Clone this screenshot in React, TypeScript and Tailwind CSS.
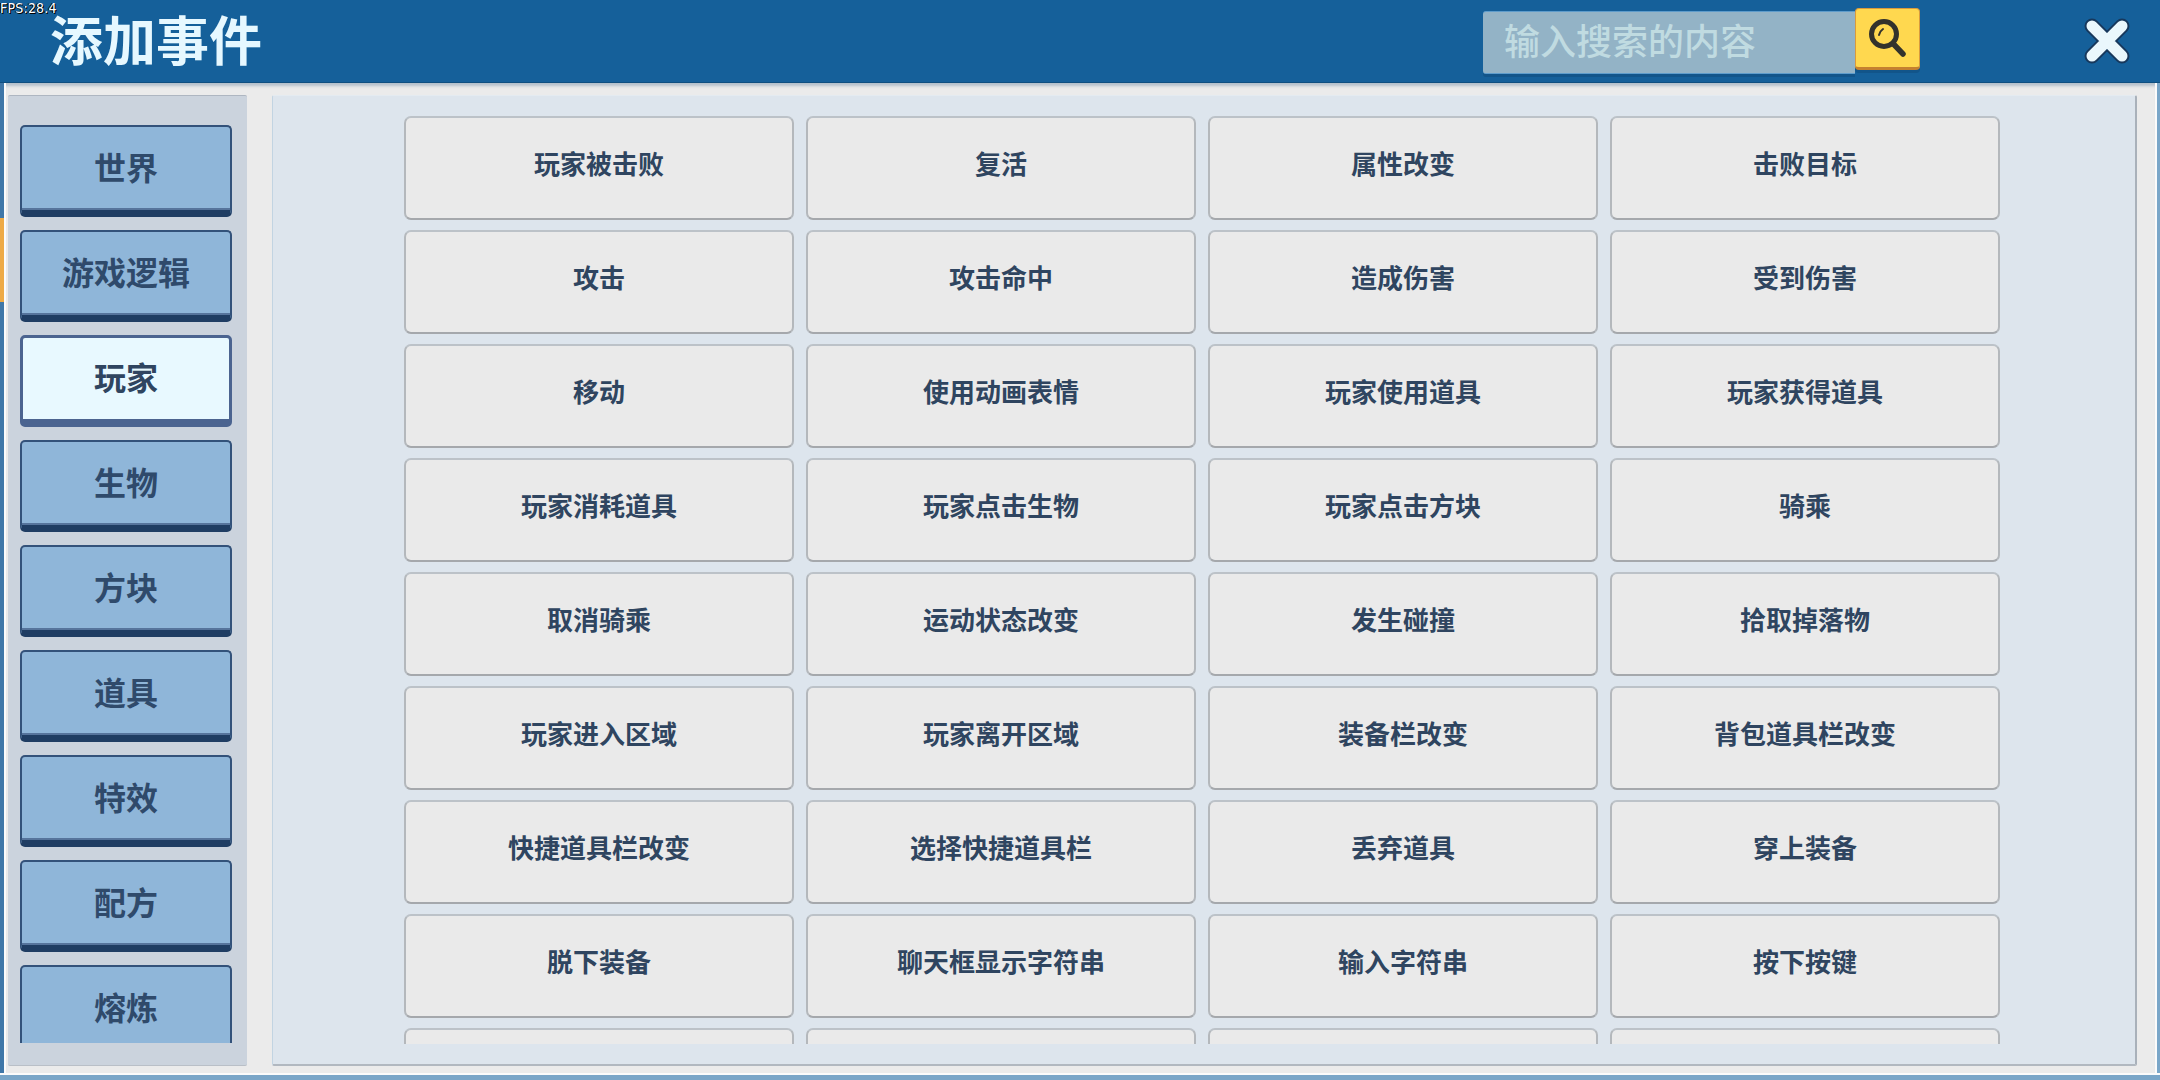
const categories = ['世界', '游戏逻辑', '玩家', '生物', '方块', '道具', '特效', '配方', '熔炼'];

const events = [
  '玩家被击败', '复活', '属性改变', '击败目标',
  '攻击', '攻击命中', '造成伤害', '受到伤害',
  '移动', '使用动画表情', '玩家使用道具', '玩家获得道具',
  '玩家消耗道具', '玩家点击生物', '玩家点击方块', '骑乘',
  '取消骑乘', '运动状态改变', '发生碰撞', '拾取掉落物',
  '玩家进入区域', '玩家离开区域', '装备栏改变', '背包道具栏改变',
  '快捷道具栏改变', '选择快捷道具栏', '丢弃道具', '穿上装备',
  '脱下装备', '聊天框显示字符串', '输入字符串', '按下按键',
  '', '', '', '',
];

const ACTIVE = '玩家';

function SearchIcon() {
  return (
    <svg width="44" height="44" viewBox="0 0 44 44" fill="none">
      <circle cx="18" cy="18" r="12.5" stroke="#33322c" strokeWidth="5" />
      <path d="M27.5 28 L37 38" stroke="#33322c" strokeWidth="5.5" strokeLinecap="round" />
      <path d="M13 19 Q14 15 17 13" stroke="#33322c" strokeWidth="2" strokeLinecap="round" />
    </svg>
  );
}

function CloseIcon() {
  return (
    <svg width="50" height="50" viewBox="0 0 50 50" fill="none">
      <path d="M10 10 L40 40 M40 10 L10 40" stroke="#17385c" strokeWidth="15" strokeLinecap="round" />
      <path d="M10 10 L40 40 M40 10 L10 40" stroke="#eaf7fc" strokeWidth="11" strokeLinecap="round" />
    </svg>
  );
}

export default function App() {
  return (
    <div className="relative flex h-[1080px] w-[2160px] flex-col overflow-hidden bg-[#ebebeb] font-['Noto_Sans_CJK_SC',sans-serif] text-[#2f4560]">
      {/* FPS counter */}
      <div className="absolute left-0 top-0 z-10 font-['DejaVu_Sans_Condensed','DejaVu_Sans',sans-serif] text-[14px] leading-[16px] tracking-[0.2px] text-white [text-shadow:1px_1px_0_#000,-1px_0_0_#000]">
        FPS:28.4
      </div>

      {/* Header */}
      <header className="flex h-[83px] shrink-0 items-center border-b border-[#0f4f80] bg-[#15609a] pl-[50px] pr-[28px]">
        <h1 className="pb-[5px] text-[53px] font-bold leading-none text-[#e6f8ff]">添加事件</h1>
        <div className="ml-auto mr-[162px] flex h-[65px] items-start pt-[2px]">
          <div className="flex h-[63px] w-[372px] items-center rounded-l-[3px] border-y border-[#5e9ccb] bg-[#93b3c6] pb-[7px] pl-[21px] shadow-[0_3px_0_#12558a]">
            <span className="text-[36px] font-medium leading-none text-[#c0dbe1]">输入搜索的内容</span>
          </div>
          <button className="-mt-[3px] flex h-[62px] w-[65px] items-center justify-center rounded-[4px] border border-[#d99a3c] border-b-[3px] border-b-[#c4812f] bg-[#ffd84f] shadow-[0_3px_0_#12558a]">
            <SearchIcon />
          </button>
        </div>
        <CloseIcon />
      </header>

      {/* Body */}
      <div className="flex min-h-0 flex-1">
        {/* left window edge */}
        <div className="flex w-[4px] shrink-0 flex-col bg-[#3f77a8]">
          <div className="mt-[135px] h-[84px] bg-[#eeaa45]" />
        </div>

        <div className="flex min-w-0 flex-1 gap-[25px] border-l-[2px] border-[#fbfbfb] pb-[7px] pl-[2px] pt-[12px] shadow-[inset_0_5px_3px_-2px_#b4c0cb]">
          {/* Categories */}
          <aside className="flex w-[239px] shrink-0 flex-col overflow-hidden rounded-[2px] border-t border-[#aeb6c1] border-b border-b-[#b9bfc7] bg-[#cbd3dd] pb-[22px] pl-[12px] pt-[29px]">
            <div className="flex w-[212px] flex-col gap-[13px] overflow-hidden">
              {categories.map((name) =>
                name === ACTIVE ? (
                  <button
                    key={name}
                    className="flex h-[92px] shrink-0 items-center justify-center rounded-[5px] border-[3px] border-b-[8px] border-[#4b6490] bg-[#e8f9ff] pb-[5px] text-[32px] font-bold leading-none"
                  >
                    {name}
                  </button>
                ) : (
                  <button
                    key={name}
                    className="flex h-[92px] shrink-0 items-center justify-center rounded-[5px] border-[2px] border-b-[7px] border-[#33527a] border-b-[#1f3d63] bg-[#8fb6d9] pb-[6px] text-[32px] font-bold leading-none text-[#2f4a6b] shadow-[inset_0_-2px_0_#56749c]"
                  >
                    {name}
                  </button>
                ),
              )}
            </div>
          </aside>

          {/* Events */}
          <main className="flex w-[1865px] shrink-0 flex-col overflow-hidden rounded-[2px] border-b-[2px] border-r-[2px] border-l border-t border-b-[#b1b8c0] border-l-[#c2d4e2] border-r-[#a9b1ba] border-t-[#e4ebf1] bg-[#dde5ed] pb-[20px] pl-[131px] pt-[20px]">
            <div className="grid w-[1596px] grid-cols-[repeat(4,390px)] auto-rows-[104px] gap-x-[12px] gap-y-[10px] overflow-hidden">
              {events.map((name, i) => (
                <button
                  key={i}
                  className="flex items-center justify-center rounded-[7px] border-x-[2px] border-b-[2px] border-t-[2px] border-x-[#b4b8bc] border-b-[#a5a8ac] border-t-[#bcc2c8] bg-[#eaeaea] pb-[10px] text-[26px] font-bold leading-none"
                >
                  {name}
                </button>
              ))}
            </div>
          </main>
        </div>

        {/* right window edge */}
        <div className="w-[5px] shrink-0 border-l-[2px] border-[#fbfbfb] bg-[#7aa6c8]" />
      </div>

      {/* Bottom window edge */}
      <div className="h-[7px] shrink-0 border-t-[2px] border-[#fbfbfb] bg-[#7aa6c8]" />
    </div>
  );
}
